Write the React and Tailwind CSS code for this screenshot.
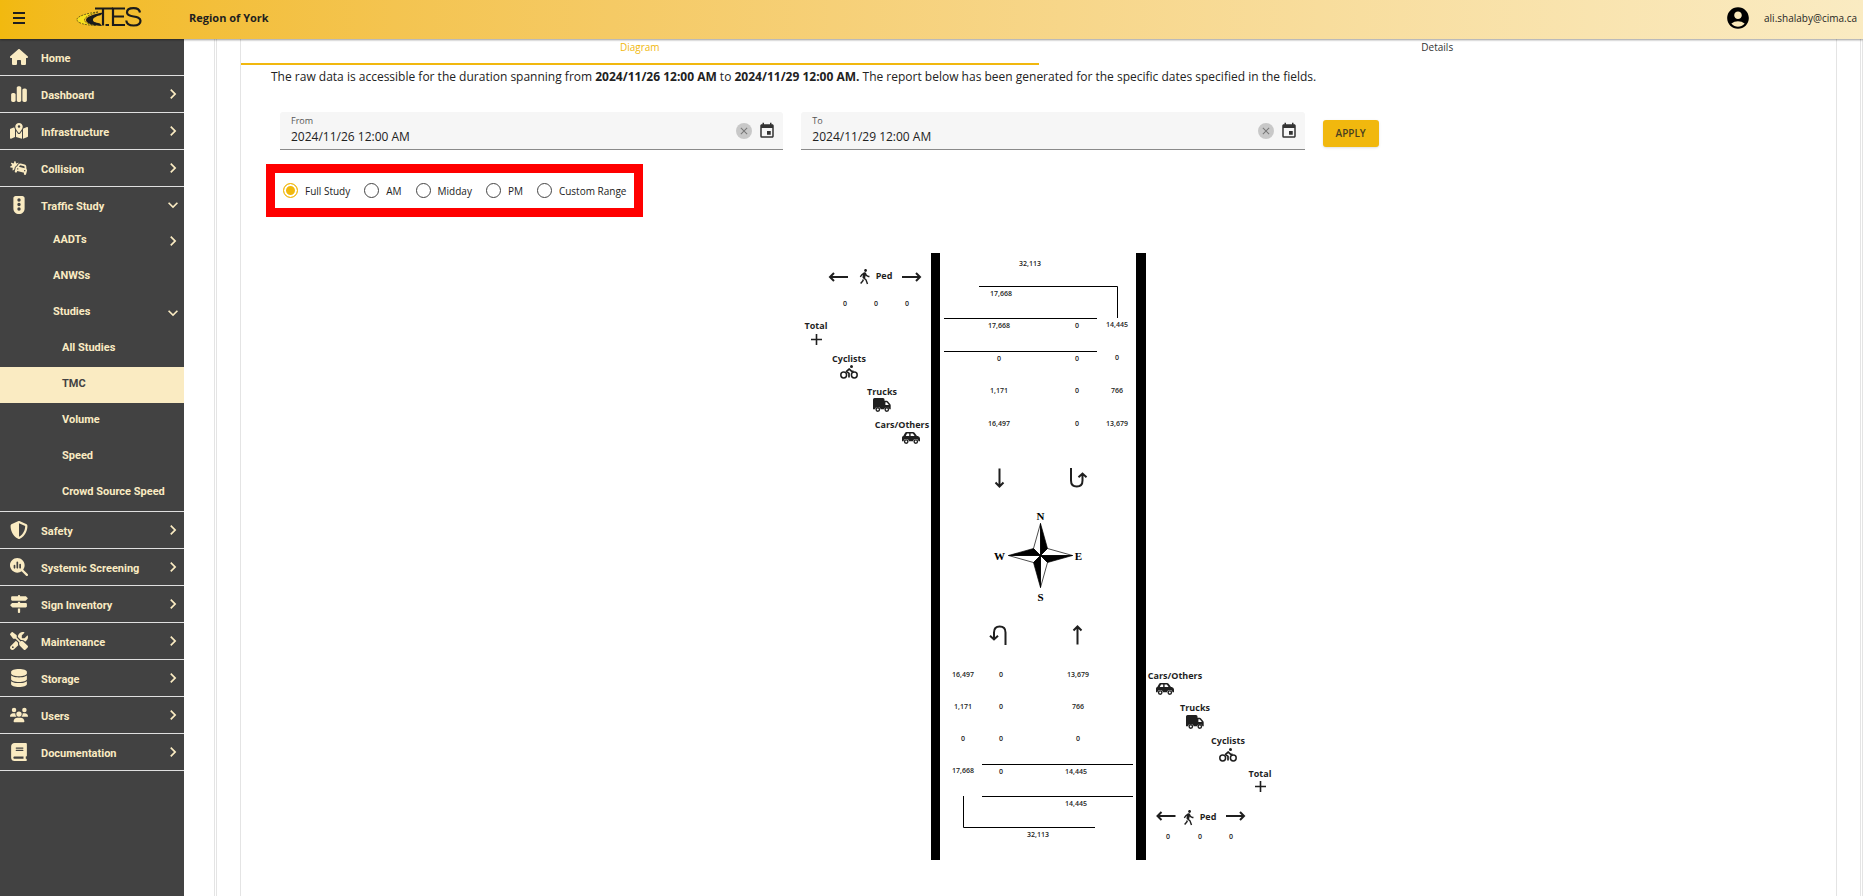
import React from "react";
import {
  FaHouse, FaChartSimple, FaMapLocationDot, FaCarBurst, FaTrafficLight, FaShieldHalved,
  FaMagnifyingGlassChart, FaSignsPost, FaScrewdriverWrench, FaDatabase, FaUsers, FaBook,
} from "react-icons/fa6";
import { MdAccountCircle, MdChevronRight, MdExpandMore, MdClose, MdEvent } from "react-icons/md";
import { RiWalkFill } from "react-icons/ri";

const topItems = [
  { label: "Home", icon: FaHouse, leaf: true },
  { label: "Dashboard", icon: FaChartSimple },
  { label: "Infrastructure", icon: FaMapLocationDot },
  { label: "Collision", icon: FaCarBurst },
  {
    label: "Traffic Study",
    icon: FaTrafficLight,
    children: [
      { label: "AADTs", more: "right" },
      { label: "ANWSs" },
      { label: "Studies", more: "down" },
      { label: "All Studies", deep: true },
      { label: "TMC", deep: true, active: true },
      { label: "Volume", deep: true },
      { label: "Speed", deep: true },
      { label: "Crowd Source Speed", deep: true },
    ],
  },
  { label: "Safety", icon: FaShieldHalved },
  { label: "Systemic Screening", icon: FaMagnifyingGlassChart },
  { label: "Sign Inventory", icon: FaSignsPost },
  { label: "Maintenance", icon: FaScrewdriverWrench },
  { label: "Storage", icon: FaDatabase },
  { label: "Users", icon: FaUsers },
  { label: "Documentation", icon: FaBook },
];

function Logo() {
  return (
    <svg width="68" height="24" viewBox="0 0 68 24" role="img" aria-label="TES">
      <path d="M22 6C12 7 1 10 1 13.500C1 17 8 19 20 19.500C12 18 8.500 16.500 8.500 14C8.500 11 15 8 22 6Z" fill="#f8e01c" stroke="#3a3210" strokeWidth="0.700" strokeDasharray="2 1" />
      <path d="M27 6.500C19 8 10 10.500 10 14C10 17.500 17 19.500 26 20L24 17.500C19 16.500 16.500 15.500 17 13.500C17.500 11.500 21 10 25 9Z" fill="#1b1b1b" />
      <g fill="none" stroke="#1b1b1b" strokeWidth="2.200">
        <path d="M19 2.500H37M27 2.500V19.500M29.500 19H33" />
        <path d="M49 2.500H37V19H49M37 10.500H48" />
        <path d="M64 6.500C63.500 3.500 61.500 2.200 57.500 2.200C53.500 2.200 51 3.500 51 6.500C51 12.500 64.500 8.500 64.500 14.800C64.500 18 61.500 19.500 57.700 19.500C53 19.500 50.500 17.700 50.300 14.500" />
      </g>
    </svg>
  );
}

function Header() {
  return (
    <header className="relative z-10 flex h-[39px] items-center bg-linear-to-r from-[#f2b90f] to-[#faebc2] pr-[6px] pb-[3px] shadow-[0_1px_2px_rgba(0,0,0,0.4)]">
      <button type="button" aria-label="Menu" className="ml-[13px] flex w-3 flex-col gap-[3px]">
        <span className="h-[2px] bg-[#1f1f1f]" />
        <span className="h-[2px] bg-[#1f1f1f]" />
        <span className="h-[2px] bg-[#1f1f1f]" />
      </button>
      <div className="ml-[51px] w-[113px]"><Logo /></div>
      <strong className="text-[11px] leading-4 text-[#1f1f1f]">Region of York</strong>
      <div className="ml-auto flex items-center gap-[13px]">
        <MdAccountCircle size={26} color="#000" />
        <span className="text-[10px] leading-4 text-[#1f1f1f]">ali.shalaby@cima.ca</span>
      </div>
    </header>
  );
}

function NavLink({ item }) {
  const Chevron = item.more === "down" ? MdExpandMore : MdChevronRight;
  return (
    <a
      href="#"
      aria-current={item.active ? "page" : undefined}
      className={`flex h-9 items-center pr-[1px] ${item.deep ? "pl-[62px]" : "pl-[53px]"} ${item.active ? "bg-[#faebc2] text-[#424242]" : ""}`}
    >
      <span className="flex-1 pb-[2px]">{item.label}</span>
      {item.more && <Chevron size={20} />}
    </a>
  );
}

function Sidebar() {
  return (
    <nav className="w-[184px] shrink-0 bg-[#424242] font-[Roboto,sans-serif] text-[11px] leading-4 font-bold text-[#faebc2]">
      {topItems.map((item) => {
        const Icon = item.icon;
        const Chevron = item.children ? MdExpandMore : MdChevronRight;
        return (
          <div key={item.label} className="border-b border-[#e0e0e0]">
            <a href="#" className="flex h-9 items-center pr-[1px]">
              <span className="flex w-[38px] justify-center"><Icon className="h-[18px] w-auto" /></span>
              <span className="flex-1 pt-1 pl-[3px]">{item.label}</span>
              {!item.leaf && <Chevron size={20} />}
            </a>
            {item.children?.map((c) => <NavLink key={c.label} item={c} />)}
          </div>
        );
      })}
    </nav>
  );
}

function DateField({ id, label, value }) {
  return (
    <div className="flex h-[38px] w-1/3 items-center rounded-t-[3px] border-b border-[#8a8a8a] bg-[#f6f6f6] pr-[7px] pl-[11px]">
      <div className="flex flex-1 flex-col pb-[2px]">
        <label htmlFor={id} className="text-[9px] leading-[14px] text-[#555]">{label}</label>
        <input id={id} defaultValue={value} className="w-full bg-transparent text-[12px] leading-[18px] text-[#222] outline-none" />
      </div>
      <button type="button" aria-label={`Clear ${label}`} className="flex size-4 items-center justify-center rounded-full bg-[#c8c8c8]">
        <MdClose size={12} color="#777" />
      </button>
      <button type="button" aria-label={`Pick ${label} date`} className="ml-[6px]"><MdEvent size={18} color="#333" /></button>
    </div>
  );
}

const periods = ["Full Study", "AM", "Midday", "PM", "Custom Range"];

function Periods() {
  return (
    <div role="radiogroup" aria-label="Period" className="mt-[14px] ml-[25px] flex h-[53px] w-fit items-center gap-[14px] border-[9px] border-[#ff0000] px-2">
      {periods.map((p, i) => (
        <label key={p} className="flex items-center gap-[7px] text-[10px] leading-4 text-[#222]">
          <input
            type="radio"
            name="period"
            defaultChecked={i === 0}
            className="size-[15px] appearance-none rounded-full border border-[#444] bg-white checked:border-[#f1b80e] checked:bg-[#f1b80e] checked:shadow-[inset_0_0_0_2px_white]"
          />
          {p}
        </label>
      ))}
    </div>
  );
}

function Wheels({ left, right, y }) {
  return (
    <g fill="none" stroke="#1f1f1f" strokeWidth="1.400">
      <circle cx={left} cy={y} r="1.700" />
      <circle cx={right} cy={y} r="1.700" />
    </g>
  );
}

function Car({ x, y }) {
  return (
    <svg x={x - 9} y={y - 6} width="18" height="12" viewBox="0 0 18 12">
      <path fillRule="evenodd" d="M4.500 0H11Q12 0 12.600 0.800L15 4H15.800Q18 4.500 18 6.500V9.300H16.700A3 3 0 0 0 10.900 9.300H7.100A3 3 0 0 0 1.300 9.300H0V5.500Q0 4.300 1.300 4L3 1Q3.500 0 4.500 0ZM5 1.500L3.800 4H7.200V1.500ZM8.600 1.500V4H12.600L10.900 1.500Z" fill="#1f1f1f" />
      <Wheels left="4.200" right="13.800" y="9.600" />
    </svg>
  );
}

function Truck({ x, y }) {
  return (
    <svg x={x - 9} y={y - 7} width="18" height="14" viewBox="0 0 18 14">
      <path fillRule="evenodd" d="M0 1.500Q0 0 1.500 0H10Q11.500 0 11.500 1.500V2.800H13.700Q14.500 2.800 15 3.400L17.300 6.300Q17.700 6.800 17.700 7.500V11.300H16.600A2.900 2.900 0 0 0 11 11.300H7.700A2.900 2.900 0 0 0 2 11.300H0ZM12.400 4.200V7H15.900L13.700 4.200Z" fill="#1f1f1f" />
      <Wheels left="4.800" right="13.800" y="11.500" />
    </svg>
  );
}

function Cyclist({ x, y }) {
  return (
    <svg x={x - 9} y={y - 7} width="18" height="14" viewBox="0 0 18 14" fill="none" stroke="#1f1f1f">
      <circle cx="3.700" cy="10" r="2.900" strokeWidth="1.500" />
      <circle cx="14.300" cy="10" r="2.900" strokeWidth="1.500" />
      <circle cx="11.500" cy="1.500" r="1.500" fill="#1f1f1f" stroke="none" />
      <path d="M13.600 6.300H11.700L9.300 4L6.500 6.300L9 8.300V12.500" strokeWidth="1.700" strokeLinejoin="round" />
    </svg>
  );
}

function LongArrow({ x, y, turn }) {
  return (
    <path transform={`translate(${x} ${y}) rotate(${turn})`} d="M-9.500 0H8.500M4.500 -4L8.500 0L4.500 4" fill="none" stroke="#1f1f1f" strokeWidth="2" />
  );
}

function UTurn({ x, y, turn }) {
  return (
    <path transform={`translate(${x} ${y}) rotate(${turn})`} d="M-7.500 -10V2.500Q-7.500 8.500 -1.700 8.500Q4 8.500 4 2.500V-4M0 -0.800L4 -4.500L8 -0.800" fill="none" stroke="#1f1f1f" strokeWidth="2" />
  );
}

function Plus({ x, y }) {
  return <path d={`M${x - 5.500} ${y}H${x + 5.500}M${x} ${y - 5.500}V${y + 5.500}`} stroke="#1f1f1f" strokeWidth="1.600" />;
}

const counts = [
  ["32,113", 1030, 263], ["17,668", 1001, 293],
  ["17,668", 999, 325], ["0", 1077, 325], ["14,445", 1117, 324],
  ["0", 999, 358], ["0", 1077, 358], ["0", 1117, 357],
  ["1,171", 999, 390], ["0", 1077, 390], ["766", 1117, 390],
  ["16,497", 999, 423], ["0", 1077, 423], ["13,679", 1117, 423],
  ["16,497", 963, 674], ["0", 1001, 674], ["13,679", 1078, 674],
  ["1,171", 963, 706], ["0", 1001, 706], ["766", 1078, 706],
  ["0", 963, 738], ["0", 1001, 738], ["0", 1078, 738],
  ["17,668", 963, 770], ["0", 1001, 771], ["14,445", 1076, 771],
  ["14,445", 1076, 803], ["32,113", 1038, 834],
  ["0", 845, 303], ["0", 876, 303], ["0", 907, 303],
  ["0", 1168, 836], ["0", 1200, 836], ["0", 1231, 836],
];

const labels = [
  ["Ped", 884, 276], ["Total", 816, 326], ["Cyclists", 849, 359], ["Trucks", 882, 392], ["Cars/Others", 902, 425],
  ["Cars/Others", 1175, 676], ["Trucks", 1195, 708], ["Cyclists", 1228, 741], ["Total", 1260, 774], ["Ped", 1208, 817],
];

function Compass() {
  return (
    <g transform="translate(1040.500 555.500)">
      <g fill="#fff" stroke="#000" strokeWidth="0.700" strokeLinejoin="round">
        <path d="M0 0L-7 -7L0 -32Z" />
        <path d="M0 0L7 -7L32 0Z" />
        <path d="M0 0L7 7L0 32Z" />
        <path d="M0 0L-7 7L-32 0Z" />
      </g>
      <g fill="#000" stroke="#000" strokeWidth="0.700" strokeLinejoin="round">
        <path d="M0 0L7 -7L0 -32Z" />
        <path d="M0 0L7 7L32 0Z" />
        <path d="M0 0L-7 7L0 32Z" />
        <path d="M0 0L-7 -7L-32 0Z" />
      </g>
      <g className="font-['Liberation_Serif',serif] text-[11px] font-bold" textAnchor="middle">
        <text x="0" y="-36">N</text>
        <text x="38" y="4">E</text>
        <text x="0" y="45">S</text>
        <text x="-41" y="4">W</text>
      </g>
    </g>
  );
}

function Diagram() {
  return (
    <svg width="521" height="607" viewBox="778 253 521 607" className="mx-auto mt-9 block" role="img" aria-label="Turning movement counts">
      <path d="M931 253H940V860H931ZM1136 253H1146V860H1136Z" />
      <path d="M979 286.500H1117.500V318M944 318.500H1097M944 351.500H1097M982 764.500H1133M982 796.500H1133M963.500 796V827.500H1095" fill="none" stroke="#000" />
      <g className="text-[7px] font-semibold" fill="#222" textAnchor="middle">
        {counts.map(([t, x, y], i) => <text key={i} x={x} y={y + 3}>{t}</text>)}
      </g>
      <g className="text-[9px] font-bold" fill="#1f1f1f" textAnchor="middle">
        {labels.map(([t, x, y], i) => <text key={i} x={x} y={y + 3}>{t}</text>)}
      </g>
      <LongArrow x={838.500} y={277} turn={180} />
      <LongArrow x={911.500} y={277} turn={0} />
      <LongArrow x={1166} y={816} turn={180} />
      <LongArrow x={1235.500} y={816} turn={0} />
      <LongArrow x={999.500} y={478} turn={90} />
      <LongArrow x={1077.500} y={635} turn={-90} />
      <UTurn x={1078.500} y={478} turn={0} />
      <UTurn x={998} y={635} turn={180} />
      <RiWalkFill x={856} y={268} size={17} color="#1f1f1f" />
      <RiWalkFill x={1180} y={809} size={17} color="#1f1f1f" />
      <Plus x={816.500} y={339.500} />
      <Plus x={1260.500} y={786.500} />
      <Cyclist x={849} y={372} />
      <Cyclist x={1228} y={755} />
      <Truck x={882} y={405} />
      <Truck x={1195} y={722} />
      <Car x={911} y={438} />
      <Car x={1165} y={689} />
      <Compass />
    </svg>
  );
}

function Tabs() {
  return (
    <div role="tablist" className="flex h-[26px] text-[10px] leading-4">
      <button type="button" role="tab" aria-selected="true" className="flex-1 border-b-2 border-[#f1b80e] pb-2 font-medium text-[#f1b80e]">Diagram</button>
      <button type="button" role="tab" aria-selected="false" className="flex-1 border-b-2 border-transparent pb-2 font-medium text-[#333]">Details</button>
    </div>
  );
}

export default function App() {
  return (
    <div className="flex min-h-screen flex-col bg-white font-['Open_Sans',sans-serif]">
      <Header />
      <div className="flex flex-1">
        <Sidebar />
        <main className="ml-[30px] flex flex-1 border-x border-[#e4e4e4] px-px">
          <div className="flex flex-1 border-x border-[#e4e4e4] px-[23px]">
            <section className="flex-1 border-x border-[#e4e4e4]">
              <Tabs />
              <p className="mt-1 ml-[30px] text-[12px] leading-4 text-[#222]">
                The raw data is accessible for the duration spanning from <strong>2024/11/26 12:00 AM</strong> to{" "}
                <strong>2024/11/29 12:00 AM.</strong> The report below has been generated for the specific dates specified in the fields.
              </p>
              <form className="mt-[27px] flex gap-[18px] pr-[46px] pl-[39px]" onSubmit={(e) => e.preventDefault()}>
                <DateField id="from" label="From" value="2024/11/26 12:00 AM" />
                <DateField id="to" label="To" value="2024/11/29 12:00 AM" />
                <button type="submit" className="mt-2 h-[27px] w-14 rounded-[3px] bg-[#f1b80e] text-[10px] font-semibold text-[#4a4020] shadow">APPLY</button>
              </form>
              <Periods />
              <Diagram />
            </section>
          </div>
        </main>
      </div>
    </div>
  );
}
